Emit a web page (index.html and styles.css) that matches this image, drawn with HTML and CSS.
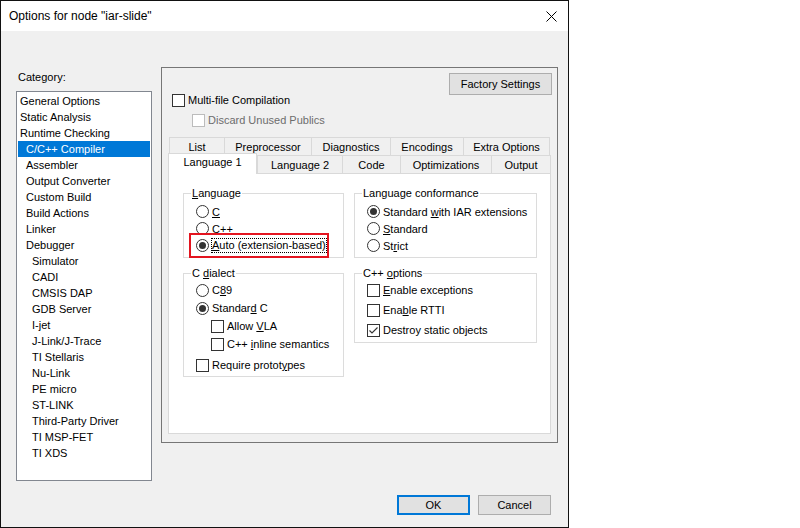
FILE: index.html
```html
<!DOCTYPE html>
<html>
<head>
  <title>Options for node "iar-slide"</title>
  <meta charset="UTF-8">
  <link rel="stylesheet" href="styles.css">
</head>
<body>
  <div class="window">
    <div class="titlebar">
      <span class="title">Options for node "iar-slide"</span>
      <span class="close">
        <svg width="11" height="11" viewBox="0 0 11 11"><path d="M0.5 0.5 L10.5 10.5 M10.5 0.5 L0.5 10.5" stroke="#000" stroke-width="1" fill="none"/></svg>
      </span>
    </div>

    <div class="client">
      <div class="main">
        <!-- Category tree -->
        <div class="category">
          <div class="caption">Category:</div>
          <ul class="listbox">
            <li>General Options</li>
            <li>Static Analysis</li>
            <li>Runtime Checking</li>
            <li class="l1 selected">C/C++ Compiler</li>
            <li class="l1">Assembler</li>
            <li class="l1">Output Converter</li>
            <li class="l1">Custom Build</li>
            <li class="l1">Build Actions</li>
            <li class="l1">Linker</li>
            <li class="l1">Debugger</li>
            <li class="l2">Simulator</li>
            <li class="l2">CADI</li>
            <li class="l2">CMSIS DAP</li>
            <li class="l2">GDB Server</li>
            <li class="l2">I-jet</li>
            <li class="l2">J-Link/J-Trace</li>
            <li class="l2">TI Stellaris</li>
            <li class="l2">Nu-Link</li>
            <li class="l2">PE micro</li>
            <li class="l2">ST-LINK</li>
            <li class="l2">Third-Party Driver</li>
            <li class="l2">TI MSP-FET</li>
            <li class="l2">TI XDS</li>
          </ul>
        </div>

        <!-- Compiler options -->
        <div class="panel">
          <div class="panel-head">
            <div class="head-opts">
              <div class="check"><span class="box"></span>Multi-file Compilation</div>
              <div class="check sub disabled"><span class="box"></span>Discard Unused Publics</div>
            </div>
            <button class="btn factory">Factory Settings</button>
          </div>

          <div class="tabs">
            <div class="tab-row back">
              <div class="tab t-list">List</div>
              <div class="tab t-prep">Preprocessor</div>
              <div class="tab t-diag">Diagnostics</div>
              <div class="tab t-enc">Encodings</div>
              <div class="tab t-extra">Extra Options</div>
            </div>
            <div class="tab-row front">
              <div class="tab t-lang1 active">Language 1</div>
              <div class="tab t-lang2">Language 2</div>
              <div class="tab t-code">Code</div>
              <div class="tab t-opt">Optimizations</div>
              <div class="tab t-out">Output</div>
            </div>

            <div class="tab-page">
              <fieldset class="group">
                <legend><u>L</u>anguage</legend>
                <div class="rows rows-17">
                  <div class="opt"><span class="radio"></span><span><u>C</u></span></div>
                  <div class="opt"><span class="radio"></span><span>C<u>+</u>+</span></div>
                  <div class="opt marked">
                    <span class="radio on"></span><span class="focus"><u>A</u>uto (extension-based)</span>
                    <span class="mark"></span>
                  </div>
                </div>
              </fieldset>

              <fieldset class="group">
                <legend>Language conformance</legend>
                <div class="rows rows-17">
                  <div class="opt"><span class="radio on"></span><span>Standard <u>w</u>ith IAR extensions</span></div>
                  <div class="opt"><span class="radio"></span><span><u>S</u>tandard</span></div>
                  <div class="opt"><span class="radio"></span><span>St<u>r</u>ict</span></div>
                </div>
              </fieldset>

              <fieldset class="group">
                <legend>C <u>d</u>ialect</legend>
                <div class="rows rows-18">
                  <div class="opt"><span class="radio"></span><span>C<u>8</u>9</span></div>
                  <div class="opt"><span class="radio on"></span><span>Standar<u>d</u> C</span></div>
                  <div class="opt nested"><span class="box"></span><span>Allow <u>V</u>LA</span></div>
                  <div class="opt nested"><span class="box"></span><span>C++ <u>i</u>nline semantics</span></div>
                  <div class="opt spaced"><span class="box"></span><span>Require protot<u>y</u>pes</span></div>
                </div>
              </fieldset>

              <fieldset class="group">
                <legend>C++ <u>o</u>ptions</legend>
                <div class="rows rows-20">
                  <div class="opt"><span class="box"></span><span><u>E</u>nable exceptions</span></div>
                  <div class="opt"><span class="box"></span><span>Ena<u>b</u>le RTTI</span></div>
                  <div class="opt">
                    <span class="box"><svg width="11" height="11" viewBox="0 0 11 11"><path d="M1.5 5.5 L4 8 L9.5 2.5" stroke="#333" stroke-width="1.1" fill="none"/></svg></span>
                    <span>Destroy static objects</span>
                  </div>
                </div>
              </fieldset>
            </div>
          </div>
        </div>
      </div>

      <div class="footer">
        <button class="btn ok">OK</button>
        <button class="btn">Cancel</button>
      </div>
    </div>
  </div>
</body>
</html>
```

FILE: styles.css
```css
:root {
  --face: #f0f0f0;
  --window-border: #111;
  --list-border: #828790;
  --panel-border: #767676;
  --tab-border: #d9d9d9;
  --group-border: #dcdcdc;
  --btn-face: #e1e1e1;
  --btn-border: #adadad;
  --accent: #0078d7;
  --control: #333;
  --gray-text: #6d6d6d;
  --mark: #e3141f;
}
* { box-sizing: border-box; }
body { margin: 0; background: #fff; color: #000; font: 11px "Liberation Sans", Arial, sans-serif; }

/* dialog frame */
.window { width: 569px; height: 528px; border: 1px solid var(--window-border); background: var(--face); display: flex; flex-direction: column; }
.titlebar { height: 30px; background: #fff; display: flex; align-items: center; flex: none; }
.title { padding-left: 8px; font-size: 12px; line-height: 14px; }
.close { margin-left: auto; width: 34px; height: 30px; display: flex; align-items: center; justify-content: center; }
.close svg { display: block; }

.client { flex: 1; display: flex; flex-direction: column; padding: 36px 10px 12px 15px; }
.main { display: flex; align-items: flex-start; gap: 9px; }

/* category list */
.category { width: 136px; flex: none; }
.caption { margin-top: 4px; padding-left: 2px; line-height: 13px; }
.listbox { margin: 7px 0 0; padding: 1px 0 0; list-style: none; height: 390px; border: 1px solid var(--list-border); background: #fff; }
.listbox li { margin: 0 1px; padding-left: 2px; line-height: 16px; white-space: nowrap; }
.listbox li.l1 { padding-left: 8px; }
.listbox li.l2 { padding-left: 14px; }
.listbox li.selected { background: var(--accent); color: #fff; }

/* right options panel */
.panel { width: 397px; height: 376px; flex: none; border: 1px solid var(--panel-border); display: flex; flex-direction: column; }
.panel-head { display: flex; justify-content: space-between; align-items: flex-start; padding: 5px 5px 0 10px; }
.head-opts { margin-top: 21px; display: flex; flex-direction: column; gap: 7px; }

.btn { font: inherit; color: #000; height: 20px; padding: 0; border: 1px solid var(--btn-border); background: var(--btn-face); }
.btn.factory { width: 103px; height: 22px; }
.btn.ok { border: 2px solid var(--accent); }

/* OK / Cancel row */
.footer { margin-top: auto; display: flex; justify-content: flex-end; gap: 8px; padding-right: 7px; }
.footer .btn { width: 73px; }

/* checkboxes and radios */
.check { display: flex; align-items: center; gap: 3px; height: 13px; line-height: 13px; }
.check.sub { margin-left: 20px; }
.check.disabled { color: var(--gray-text); }
.check.disabled .box { border-color: #bcbcbc; }
.box { width: 13px; height: 13px; flex: none; border: 1px solid var(--control); background: #fff; display: block; }
.box svg { display: block; }
.radio { width: 13px; height: 13px; flex: none; border: 1px solid var(--control); border-radius: 50%; background: #fff; display: flex; align-items: center; justify-content: center; }
.radio.on::after { content: ''; width: 7px; height: 7px; border-radius: 50%; background: var(--control); }

/* tab control */
.tabs { flex: 1; margin: 10px 6px 8px; display: flex; flex-direction: column; }
.tab-row { display: flex; height: 18px; flex: none; }
.tab-row.back { margin-left: 1px; }
.tab-row.front { margin-left: 2px; }
.tab { height: 18px; line-height: 18px; text-align: center; white-space: nowrap; background: var(--face); border: 1px solid var(--tab-border); border-right: none; border-bottom: none; }
.tab:last-child { border-right: 1px solid var(--tab-border); }
.tab.active { position: relative; z-index: 1; background: #fff; height: 21px; line-height: 17px; margin: -2px 0 0 -2px; border-right: 1px solid var(--tab-border); }
.t-list { width: 55px; } .t-prep { width: 87px; } .t-diag { width: 79px; } .t-enc { width: 73px; } .t-extra { width: 87px; }
.t-lang1 { width: 89px; } .t-lang2 { width: 85px; } .t-code { width: 58px; } .t-opt { width: 91px; } .t-out { width: 60px; }

.tab-page { flex: 1; background: #fff; border: 1px solid var(--tab-border); padding: 13px 13px 0 14px; display: grid; grid-template-columns: 161px 183px; column-gap: 10px; row-gap: 9px; align-items: start; align-content: start; }

/* group boxes */
.group { margin: 0; min-width: 0; border: 1px solid var(--group-border); padding: 0 0 0 7px; }
.group legend { padding: 0 1px; line-height: 13px; }
.rows-17 { padding: 3px 0 3px; }
.rows-17 .opt { height: 17px; }
.rows-18 { padding: 1px 0 2px; }
.rows-18 .opt { height: 18px; }
.rows-18 .opt.spaced { margin-top: 3px; }
.rows-20 { padding: 0 0 2px; }
.rows-20 .opt { height: 20px; }
.opt { display: flex; align-items: center; gap: 3px; margin-left: 5px; white-space: nowrap; }
.opt.nested { margin-left: 20px; }
.focus { outline: 1px dotted #000; line-height: 13px; }

/* red highlight frame drawn over the "Auto" choice */
.opt.marked { position: relative; }
.mark { position: absolute; left: -7px; top: -4px; bottom: -4px; width: 140px; border: 2px solid var(--mark); pointer-events: none; }
```
